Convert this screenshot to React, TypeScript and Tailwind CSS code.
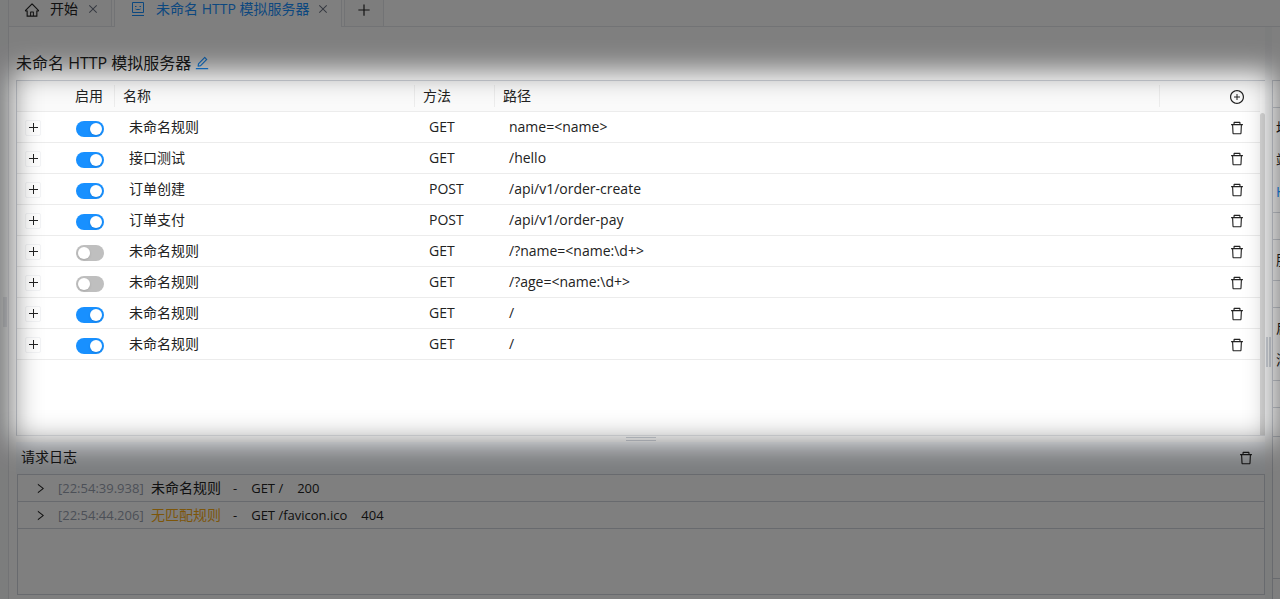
import { useState } from 'react';
import {
  AiOutlineClose,
  AiOutlineDelete,
  AiOutlineEdit,
  AiOutlineHome,
  AiOutlinePlus,
  AiOutlinePlusCircle,
  AiOutlineRight,
} from 'react-icons/ai';

type Rule = { name: string; method: string; path: string; enabled: boolean };

const initialRules: Rule[] = [
  { name: '未命名规则', method: 'GET', path: 'name=<name>', enabled: true },
  { name: '接口测试', method: 'GET', path: '/hello', enabled: true },
  { name: '订单创建', method: 'POST', path: '/api/v1/order-create', enabled: true },
  { name: '订单支付', method: 'POST', path: '/api/v1/order-pay', enabled: true },
  { name: '未命名规则', method: 'GET', path: '/?name=<name:\\d+>', enabled: false },
  { name: '未命名规则', method: 'GET', path: '/?age=<name:\\d+>', enabled: false },
  { name: '未命名规则', method: 'GET', path: '/', enabled: true },
  { name: '未命名规则', method: 'GET', path: '/', enabled: true },
];

const logs = [
  { time: '[22:54:39.938]', rule: '未命名规则', matched: true, request: 'GET /', status: 200 },
  { time: '[22:54:44.206]', rule: '无匹配规则', matched: false, request: 'GET /favicon.ico', status: 404 },
];

function MockIcon() {
  return (
    <svg width="12" height="14" viewBox="0 0 12 14" fill="none" stroke="currentColor">
      <path d="M.5.5h11v10H.5zM0 13.500h12M3 4.500h1.500M7.500 4.500H9M3.500 7l1 .5h3l1-.5" />
    </svg>
  );
}

function TabBar() {
  return (
    <nav className="flex h-[27px] shrink-0 border-b border-gray-200">
      <div className="flex w-[103px] items-center border-r border-gray-200 bg-[#fafafa] pb-2 pl-[15px]">
        <AiOutlineHome size={16} className="mt-[2px]" />
        <a href="#start" className="ml-[10px]">开始</a>
        <button aria-label="关闭" className="ml-[9px] text-gray-500"><AiOutlineClose size={12} /></button>
      </div>
      <div className="-mb-px ml-[2px] flex w-[228px] items-center border-x border-gray-200 bg-white pb-[9px] pl-[17px] text-[#1890ff]">
        <MockIcon />
        <a href="#mock" className="ml-3 whitespace-nowrap">未命名 HTTP 模拟服务器</a>
        <button aria-label="关闭" className="ml-2 text-gray-500"><AiOutlineClose size={12} /></button>
      </div>
      <button aria-label="新建" className="ml-[2px] flex w-10 items-center justify-center border-x border-gray-200 bg-[#fafafa] pb-[6px]">
        <AiOutlinePlus size={16} />
      </button>
    </nav>
  );
}

function Switch({ checked, onChange }: { checked: boolean; onChange: () => void }) {
  return (
    <label className="relative mt-[5px] block h-4 w-7 cursor-pointer">
      <input type="checkbox" role="switch" aria-label="启用" checked={checked} onChange={onChange} className="peer sr-only" />
      <span className="block h-4 w-7 rounded-full bg-[#bfbfbf] peer-checked:bg-[#1890ff]" />
      <span className="absolute top-[2px] left-[2px] size-3 rounded-full bg-white shadow peer-checked:left-[14px]" />
    </label>
  );
}

function RuleTable() {
  const [rules, setRules] = useState(initialRules);
  const toggle = (index: number) =>
    setRules(rules.map((r, i) => (i === index ? { ...r, enabled: !r.enabled } : r)));
  const remove = (index: number) => setRules(rules.filter((_, i) => i !== index));
  const add = () => setRules([...rules, { name: '未命名规则', method: 'GET', path: '/', enabled: true }]);

  return (
    <table className="w-full table-fixed border-collapse text-left">
      <colgroup>
        <col className="w-[50px]" />
        <col className="w-12" />
        <col className="w-[300px]" />
        <col className="w-20" />
        <col />
        <col className="w-[100px]" />
      </colgroup>
      <thead>
        <tr className="h-[30px] border-b border-[#ececec] bg-[#fafafa]">
          <th />
          {['启用', '名称', '方法', '路径'].map((title) => (
            <th key={title} className="p-0 font-normal">
              <div className="h-[22px] border-r border-[#ececec] pl-2 leading-[22px]">{title}</div>
            </th>
          ))}
          <th className="p-0 pl-[69px]">
            <button aria-label="添加" onClick={add} className="mt-[2px] block"><AiOutlinePlusCircle size={16} /></button>
          </th>
        </tr>
      </thead>
      <tbody>
        {rules.map((rule, i) => (
          <tr key={i} className="h-[31px] border-b border-[#ececec]">
            <td className="p-0 pl-2">
              <button aria-label="展开" className="mt-[2px] flex size-4 items-center justify-center rounded-xs border border-gray-100">
                <svg width="9" height="9" stroke="#222"><path d="M0 4.500h9M4.500 0v9" /></svg>
              </button>
            </td>
            <td className="p-0 pl-[9px]"><Switch checked={rule.enabled} onChange={() => toggle(i)} /></td>
            <td className="p-0 pl-[14px]">{rule.name}</td>
            <td className="p-0 pl-[14px]">{rule.method}</td>
            <td className="p-0 pl-[14px]">{rule.path}</td>
            <td className="p-0 pl-[69px]">
              <button aria-label="删除" onClick={() => remove(i)} className="mt-[2px] block"><AiOutlineDelete size={16} /></button>
            </td>
          </tr>
        ))}
      </tbody>
    </table>
  );
}

function RequestLog() {
  return (
    <section className="flex flex-1 flex-col">
      <header className="flex h-8 items-center justify-between bg-[#f8fbff] pr-[11px] pb-[2px] pl-[5px]">
        <h2>请求日志</h2>
        <button aria-label="清空日志" className="mt-[2px]"><AiOutlineDelete size={16} /></button>
      </header>
      <ul className="ml-px flex-1 border border-gray-300 text-[13px]">
        {logs.map((log) => (
          <li key={log.time} className="flex h-[27px] items-center border-b border-gray-300 pl-4">
            <button aria-label="展开"><AiOutlineRight size={13} /></button>
            <time className="ml-[11px] w-[93px] text-gray-400">{log.time}</time>
            <span className={log.matched ? 'text-sm' : 'text-sm text-[#faad14]'}>{log.rule}</span>
            <span className="ml-3">-</span>
            <span className="ml-[14px]">{log.request}</span>
            <span className="ml-[14px]">{log.status}</span>
          </li>
        ))}
      </ul>
    </section>
  );
}

function SidePanel() {
  return (
    <aside className="mt-[53px] flex w-2 shrink-0 flex-col overflow-hidden border-l border-gray-300 whitespace-nowrap">
      <div className="h-7 shrink-0 border-y border-gray-300" />
      <div className="h-[105px] shrink-0 border-b border-gray-300 pt-1 pl-[3px] leading-8">
        <p>地址</p>
        <p>端口</p>
        <a href="#http" className="text-[#1890ff]">HTTP</a>
      </div>
      <div className="h-[27px] shrink-0 border-b border-gray-300" />
      <div className="h-[41px] shrink-0 border-b border-gray-300 pl-[3px] leading-10">服务</div>
      <div className="h-[27px] shrink-0 border-b border-gray-300" />
      <div className="h-[73px] shrink-0 border-b border-gray-300 pt-1 pl-[3px] leading-8">
        <p>启动</p>
        <p>添加</p>
      </div>
      <div className="h-[27px] shrink-0 border-b border-gray-300" />
      <div className="h-[29px] shrink-0 border-b border-gray-300" />
      <div className="mb-5 flex-1 border-b border-gray-300" />
    </aside>
  );
}

export default function App() {
  return (
    <div className="relative flex min-h-screen overflow-hidden bg-white font-['Open_Sans','Noto_Sans_CJK_SC',sans-serif] text-sm text-[#222]">
      <div className="flex w-[9px] shrink-0 items-center border-r border-gray-200 bg-gray-50 pt-[25px] pl-[3px]">
        <div className="h-[30px] w-1 bg-gray-200" />
      </div>
      <div className="flex min-w-0 flex-1 flex-col">
        <TabBar />
        <div className="flex flex-1">
          <main className="ml-[7px] flex min-w-0 flex-1 flex-col pb-1">
            <div className="flex h-[53px] shrink-0 items-center pt-[18px]">
              <h1 className="text-base">未命名 HTTP 模拟服务器</h1>
              <button aria-label="重命名" className="ml-[3px] mt-px text-[#1890ff]"><AiOutlineEdit size={16} /></button>
            </div>
            <div className="flex h-[356px] shrink-0 border-y border-l border-gray-300 border-b-gray-200">
              <div className="min-w-0 flex-1"><RuleTable /></div>
              <div className="mt-8 w-[5px] rounded-t-full bg-[#dcdcdc]" />
            </div>
            <div className="flex h-[6px] shrink-0 items-center justify-center">
              <div className="h-1 w-[30px] border-y border-gray-300" />
            </div>
            <RequestLog />
          </main>
          <div className="flex w-[7px] shrink-0 items-center bg-gray-50 pt-[78px] pl-px">
            <div className="h-[30px] w-[5px] border-x-2 border-gray-300" />
          </div>
          <SidePanel />
        </div>
      </div>
      {/* guided tour spotlight over the rule list */}
      <div className="pointer-events-none absolute top-[72px] right-[6px] left-[13px] h-[370px] rounded-lg shadow-[0_0_0_1000px_rgba(0,0,0,0.5)] blur-[14px]" />
    </div>
  );
}
